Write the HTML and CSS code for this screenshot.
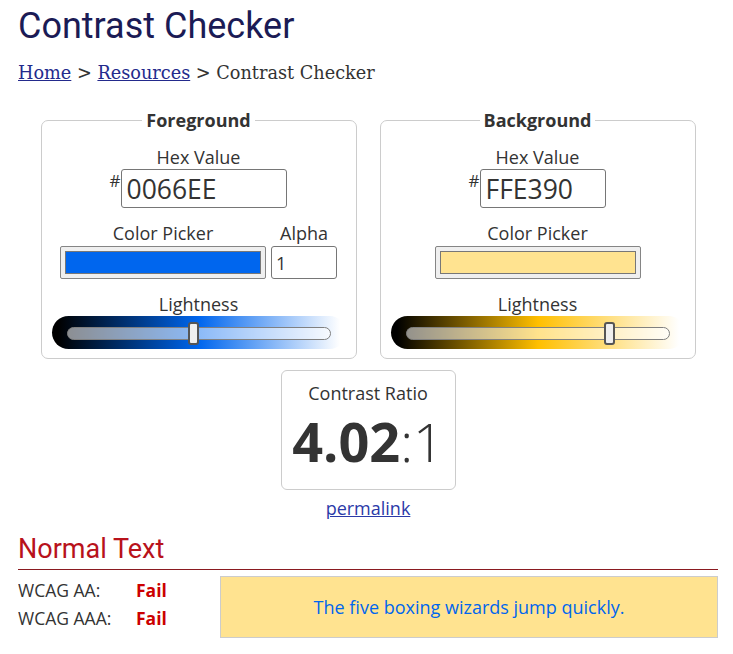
FILE: index.html
```html
<!DOCTYPE html>
<html lang="en">
<head>
  <meta charset="UTF-8">
  <title>Contrast Checker</title>
  <meta name="viewport" content="width=device-width, initial-scale=1.0">
  <link rel="stylesheet" href="styles.css">
</head>
<body>

<h1>Contrast Checker</h1>
<div class="crumbs"><a href="#">Home</a> &gt; <a href="#">Resources</a> &gt; Contrast Checker</div>

<div class="pickers">
  <fieldset class="picker">
    <legend>Foreground</legend>
    <div class="lbl">Hex Value</div>
    <div class="hex-row">
      <span class="hash">#</span>
      <input type="text" class="hex fg-hex" value="0066EE">
    </div>
    <div class="color-row">
      <div class="col">
        <div class="lbl">Color Picker</div>
        <div class="swatch"><div class="swatch-in fg-swatch"></div></div>
      </div>
      <div class="col">
        <div class="lbl">Alpha</div>
        <input type="text" class="alpha" value="1">
      </div>
    </div>
    <div class="lbl">Lightness</div>
    <div class="slider fg-slider">
      <div class="track"></div>
      <div class="thumb" style="left: 136px"></div>
    </div>
  </fieldset>

  <fieldset class="picker">
    <legend>Background</legend>
    <div class="lbl">Hex Value</div>
    <div class="hex-row">
      <span class="hash">#</span>
      <input type="text" class="hex bg-hex" value="FFE390">
    </div>
    <div class="color-row">
      <div class="col">
        <div class="lbl">Color Picker</div>
        <div class="swatch"><div class="swatch-in bg-swatch"></div></div>
      </div>
    </div>
    <div class="lbl">Lightness</div>
    <div class="slider bg-slider">
      <div class="track"></div>
      <div class="thumb" style="left: 213px"></div>
    </div>
  </fieldset>
</div>

<div class="ratio-wrap">
  <div class="ratio-box">
    <div class="lbl">Contrast Ratio</div>
    <div class="ratio"><b>4.02</b><span>:1</span></div>
  </div>
  <a href="#" class="permalink">permalink</a>
</div>

<h2>Normal Text</h2>
<div class="result">
  <table class="wcag">
    <tr><td>WCAG AA:</td><td class="fail">Fail</td></tr>
    <tr><td>WCAG AAA:</td><td class="fail">Fail</td></tr>
  </table>
  <div class="sample">The five boxing wizards jump quickly.</div>
</div>

</body>
</html>
```

FILE: styles.css
```css
* { box-sizing: border-box; }
body {
  font-family: 'Open Sans', sans-serif;
  margin: 0 15px 0 18px;
  color: #333;
  background: #fff;
}

h1 {
  font-family: Roboto, sans-serif;
  font-weight: 400;
  font-size: 36px;
  line-height: 43px;
  color: #1b1b55;
  margin: 5px 0 0;
}

.crumbs {
  font-family: 'DejaVu Serif', serif;
  font-size: 17.7px;
  color: #333;
  margin-top: 14px;
  line-height: 22px;
}
.crumbs a { color: #232a8c; }

.pickers {
  display: flex;
  justify-content: center;
  gap: 23px;
  margin-top: 25px;
}

.picker {
  width: 316px;
  margin: 0;
  padding: 0 10px 9px;
  border: 1px solid #ccc;
  border-radius: 7px;
  text-align: center;
}
.picker legend {
  margin: 0 auto;
  padding: 0 4px;
  font-weight: 700;
  font-size: 18px;
  line-height: 22px;
}

.lbl {
  font-size: 18px;
  line-height: 22px;
}
.picker > .lbl:first-of-type { margin-top: 15px; }

.hex-row {
  display: flex;
  justify-content: center;
  align-items: flex-start;
  margin-top: 1px;
}
.hash {
  font-size: 17px;
  line-height: 16px;
  margin: 4px 1px 0 0;
}
.hex {
  font-family: 'Open Sans', sans-serif;
  font-size: 26.5px;
  height: 39px;
  padding: 0 4px;
  color: #333;
  border: 1px solid #767676;
  border-radius: 3px;
}
.fg-hex { width: 166px; }
.bg-hex { width: 126px; }

.color-row {
  display: flex;
  justify-content: center;
  gap: 5px;
  margin-top: 14px;
}
.col { display: flex; flex-direction: column; align-items: center; }
.col .lbl { margin-bottom: 2px; }

.swatch {
  width: 206px;
  height: 33px;
  padding: 4px;
  background: #efefef;
  border: 1px solid #858585;
  border-radius: 2px;
}
.swatch-in { height: 100%; border: 1px solid #777; }
.fg-swatch { background: #0066ee; }
.bg-swatch { background: #ffe390; }

.alpha {
  width: 66px;
  height: 33px;
  font-family: 'Open Sans', sans-serif;
  font-size: 18px;
  padding: 0 4px;
  color: #333;
  border: 1px solid #767676;
  border-radius: 3px;
}

.color-row + .lbl { margin-top: 14px; }

.slider {
  position: relative;
  width: 294px;
  height: 33px;
  margin: 1px auto 0;
  border-radius: 17px;
}
.fg-slider { background: linear-gradient(to right, #000 2%, #0066ee 50%, #fff 98%); }
.bg-slider { background: linear-gradient(to right, #000 2%, #ffbf00 50%, #fff 98%); }
.track {
  position: absolute;
  left: 15px;
  right: 15px;
  top: 11px;
  height: 13px;
  background: rgba(255,255,255,0.55);
  border: 1px solid #808080;
  border-radius: 7px;
}
.thumb {
  position: absolute;
  top: 6px;
  width: 11px;
  height: 23px;
  background: #efefef;
  border: 2px solid #555;
  border-radius: 3px;
}

.ratio-wrap {
  display: flex;
  flex-direction: column;
  align-items: center;
  margin-top: 11px;
}
.ratio-box {
  width: 175px;
  height: 120px;
  border: 1px solid #ccc;
  border-radius: 6px;
  text-align: center;
  padding-top: 11px;
}
.ratio {
  font-size: 54px;
  line-height: 60px;
  margin-top: 7px;
}
.ratio b { font-weight: 700; }
.ratio span { font-weight: 300; }
.permalink {
  font-size: 18px;
  color: #2b3aa8;
  margin-top: 6px;
  line-height: 24px;
}

h2 {
  font-family: Roboto, sans-serif;
  font-weight: 400;
  font-size: 27px;
  color: #b8121b;
  margin: 13px 0 0;
  line-height: 32px;
  padding-bottom: 4px;
  border-bottom: 1px solid #8a1a20;
}

.result {
  display: flex;
  align-items: flex-start;
  margin-top: 6px;
}
.wcag {
  border-collapse: collapse;
  width: 202px;
  font-size: 17.5px;
}
.wcag td { padding: 0; height: 28px; }
.wcag td:first-child { width: 118px; }
.fail { color: #c00; font-weight: 700; }
.sample {
  flex: 1;
  height: 62px;
  display: flex;
  align-items: center;
  justify-content: center;
  background: #ffe390;
  border: 1px solid #ccc;
  color: #0066ee;
  font-size: 18px;
}
```
